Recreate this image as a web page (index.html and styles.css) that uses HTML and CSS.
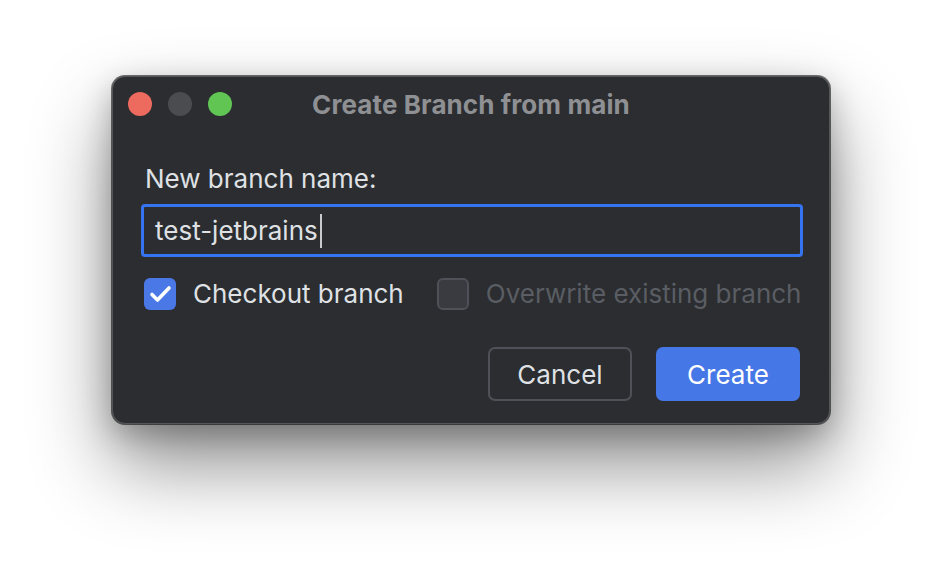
FILE: index.html
```html
<!DOCTYPE html>
<html lang="en">
<head>
<meta charset="utf-8">
<title>Create Branch</title>
<link rel="stylesheet" href="styles.css">
</head>
<body>
<div class="stage">
  <div class="dialog">
    <div class="titlebar">
      <div class="lights">
        <span class="light red"></span>
        <span class="light gray"></span>
        <span class="light green"></span>
      </div>
      <div class="title">Create Branch from main</div>
    </div>
    <div class="content">
      <label class="label">New branch name:</label>
      <div class="input"><span class="value">test-jetbrains</span><span class="caret"></span></div>
      <div class="options">
        <div class="option">
          <span class="check checked">
            <svg viewBox="0 0 32 32" width="32" height="32"><path d="M8 16.5 L13.5 22 L25 10" fill="none" stroke="#fff" stroke-width="3.6" stroke-linecap="round" stroke-linejoin="round"/></svg>
          </span>
          <span class="opt-text">Checkout branch</span>
        </div>
        <div class="option disabled">
          <span class="check"></span>
          <span class="opt-text">Overwrite existing branch</span>
        </div>
      </div>
      <div class="buttons">
        <button class="btn cancel">Cancel</button>
        <button class="btn primary">Create</button>
      </div>
    </div>
  </div>
</div>
</body>
</html>
```
FILE: styles.css
```css
html, body {
  margin: 0;
  padding: 0;
  background: #ffffff;
}
body {
  width: 942px;
  height: 572px;
  overflow: hidden;
  font-family: Inter, "Open Sans", sans-serif;
}
.stage {
  display: flex;
  justify-content: center;
  padding-top: 76px;
}
.dialog {
  width: 718px;
  height: 348px;
  box-sizing: border-box;
  background: #2b2d30;
  border: 1px solid #55565a;
  border-radius: 13px;
  box-shadow: 0 0 0 1px rgba(0,0,0,0.55), 0 40px 80px rgba(0,0,0,0.45), 0 10px 30px rgba(0,0,0,0.25);
  display: flex;
  flex-direction: column;
}
.titlebar {
  position: relative;
  height: 55px;
  display: flex;
  align-items: center;
  justify-content: center;
}
.lights {
  position: absolute;
  left: 15px;
  top: 15px;
  display: flex;
  gap: 16px;
}
.light {
  width: 24px;
  height: 24px;
  border-radius: 50%;
  display: block;
}
.red { background: #ec6a5e; }
.gray { background: #4b4c4f; }
.green { background: #61c554; }
.title {
  color: #8f9093;
  font-weight: 700;
  font-size: 26px;
  line-height: 32px;
  padding-top: 1px;
  letter-spacing: 0.1px;
}
.content {
  padding: 0 26px 0 28px;
  display: flex;
  flex-direction: column;
}
.label {
  color: #dfe1e5;
  font-size: 26px;
  line-height: 32px;
  margin-top: 31px;
  padding-left: 4px;
}
.input {
  margin-top: 9px;
  height: 53px;
  box-sizing: border-box;
  border: 3px solid #3574f0;
  border-radius: 4px;
  background: #2b2d30;
  display: flex;
  align-items: center;
  padding-left: 11px;
  color: #dfe1e5;
  font-size: 26px;
}
.caret {
  width: 2px;
  height: 34px;
  background: #c9cbcf;
  margin-left: 2px;
}
.options {
  margin-top: 21px;
  display: flex;
  align-items: center;
  gap: 33px;
  padding-left: 3px;
}
.option {
  display: flex;
  align-items: center;
  gap: 17px;
  font-size: 26px;
  line-height: 32px;
  color: #dfe1e5;
}
.check {
  width: 32px;
  height: 32px;
  box-sizing: border-box;
  border-radius: 6px;
  background: #393b40;
  border: 2px solid #4e5157;
  display: block;
}
.check.checked {
  background: #4a78e6;
  border: none;
}
.check svg { display: block; }
.option.disabled { color: #5a5d63; }
.buttons {
  margin-top: 37px;
  display: flex;
  justify-content: flex-end;
  gap: 24px;
  padding-right: 3px;
}
.btn {
  width: 144px;
  height: 54px;
  box-sizing: border-box;
  border-radius: 7px;
  font-family: Inter, "Open Sans", sans-serif;
  font-size: 26px;
  color: #dfe1e5;
  background: #2b2d30;
  border: 2px solid #4e5157;
  padding: 0;
}
.btn.primary {
  background: #4677e6;
  border: none;
  color: #ffffff;
}
```
